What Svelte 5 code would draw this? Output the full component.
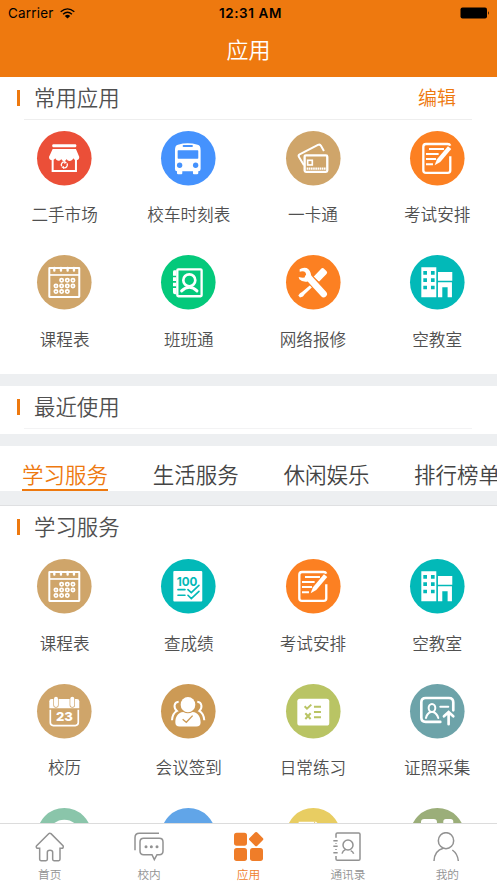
<script lang="ts">
	type App = { name: string; icon: string; color: string };

	const favourites: App[] = [
		{ name: '二手市场', icon: 'market', color: '#eb4f38' },
		{ name: '校车时刻表', icon: 'bus', color: '#4592fd' },
		{ name: '一卡通', icon: 'card', color: '#cfa56a' },
		{ name: '考试安排', icon: 'exam', color: '#fc8022' },
		{ name: '课程表', icon: 'timetable', color: '#cfa56a' },
		{ name: '班班通', icon: 'contacts', color: '#04c97b' },
		{ name: '网络报修', icon: 'repair', color: '#fc8022' },
		{ name: '空教室', icon: 'building', color: '#02b9b8' }
	];

	const services: App[] = [
		{ name: '课程表', icon: 'timetable', color: '#cfa56a' },
		{ name: '查成绩', icon: 'score', color: '#02b9b8' },
		{ name: '考试安排', icon: 'exam', color: '#fc8022' },
		{ name: '空教室', icon: 'building', color: '#02b9b8' },
		{ name: '校历', icon: 'calendar', color: '#cfa56a' },
		{ name: '会议签到', icon: 'meeting', color: '#cc9a55' },
		{ name: '日常练习', icon: 'practice', color: '#b9c464' },
		{ name: '证照采集', icon: 'photo', color: '#6da3a9' },
		{ name: '', icon: 'ring', color: '#8ac5aa' },
		{ name: '', icon: 'plain', color: '#61a5e8' },
		{ name: '', icon: 'document', color: '#e8cd62' },
		{ name: '', icon: 'panels', color: '#9bae79' }
	];

	const categories = ['学习服务', '生活服务', '休闲娱乐', '排行榜单'];
	let category = $state('学习服务');

	const navItems = [
		{ name: '首页', icon: 'home' },
		{ name: '校内', icon: 'chat' },
		{ name: '应用', icon: 'apps' },
		{ name: '通讯录', icon: 'book' },
		{ name: '我的', icon: 'me' }
	];
	let page = $state('应用');

	// timetable dots as [x, y]
	const dots = [
		[74, 76], [91, 76], [108, 76],
		[57, 93], [74, 93], [91, 93], [108, 93],
		[57, 110], [74, 110], [91, 110]
	];
</script>

{#snippet appIcon(icon: string, color: string)}
	<svg class="app-icon" viewBox="0 0 164 164" style:color={color} aria-hidden="true">
		<circle cx="82" cy="82" r="82" fill="currentColor" />
		{#if icon === 'market'}
			<rect class="fill" x="46" y="40" width="72" height="9" rx="3" />
			<path class="fill" d="M47 54H117L127 78C127 90 113 91 109 82C105 92 92 92 89 84C85 93 76 92 73 84C69 92 58 91 55 82C50 91 36 89 36 78Z" />
			<path class="line" stroke-width="6" d="M47 86V120H117V86" />
			<path class="line" stroke-width="4" d="M74 106A9 9 0 0 1 84 93M90 97A9 9 0 0 1 79 110" />
			<path class="fill" d="M82 89L90 95L82 99ZM81 105L73 108L81 114Z" />
		{:else if icon === 'bus'}
			<path class="fill" d="M42 58Q42 42 51 41Q80 33 110 41Q119 42 119 58V114Q119 121 112 121V127Q112 130 108 130H99Q96 130 96 127V121H64V127Q64 130 61 130H52Q48 130 48 127V121Q42 121 42 114Z" />
			<rect x="50" y="58" width="62" height="25" rx="2" fill="currentColor" />
			<rect x="65" y="42" width="31" height="6" rx="3" fill="currentColor" />
			<circle cx="56" cy="103" r="8" fill="currentColor" />
			<circle cx="104" cy="103" r="8" fill="currentColor" />
		{:else if icon === 'card'}
			<path class="line" stroke-width="6" d="M54 103L39 78Q36 73 41 70L96 42Q102 39 105 44L114 60" />
			<rect class="line" stroke-width="7" x="56" y="73" width="68" height="50" rx="4" />
			<rect class="line" stroke-width="5" x="65" y="88" width="14" height="14" />
			<path class="line" stroke-width="7" stroke-dasharray="5 1.5" d="M62 113H119" />
		{:else if icon === 'exam'}
			<path class="line" stroke-width="7" d="M121 44Q119 39 113 39H48Q40 39 40 47V118Q40 126 48 126H113Q121 126 121 118V76" />
			<path class="line" stroke-width="6" d="M57 54H102M48 69H86M48 84H78M48 100H69" />
			<path class="fill" d="M114 46L124 54L91 93L74 103L81 85Z" />
		{:else if icon === 'timetable'}
			<rect class="line" stroke-width="6" x="37" y="39" width="90" height="87" rx="1" />
			<path class="line" stroke-width="5" d="M37 60H127" />
			<path class="line" stroke-width="7" stroke-linecap="round" d="M52 39V47M72 39V47M92 39V47M111 39V47" />
			{#each dots as [x, y]}
				<circle class="line" stroke-width="5" cx={x} cy={y} r="5" />
			{/each}
		{:else if icon === 'contacts'}
			<path class="fill" d="M46 46H39Q36 46 36 52V62H46V67H36V78H46V83H36V94H46V99H36V112Q36 118 42 118H46Z" />
			<rect class="line" stroke-width="7" x="49" y="43" width="73" height="81" rx="3" />
			<circle class="line" stroke-width="8" cx="85" cy="76" r="18" />
			<path class="line" stroke-width="9" stroke-linecap="round" d="M62 108Q85 86 108 108" />
		{:else if icon === 'repair'}
			<path class="fill" d="M105 42Q110 36 115 42L122 49Q126 53 121 58L99 80L82 66Z" />
			<path class="fill" d="M73 90L79 96L56 118L51 125L42 128L37 122L42 115L48 111Z" />
			<path stroke="currentColor" stroke-width="27" d="M70 70L113 115" />
			<path class="line" stroke-width="20" stroke-linecap="round" d="M67 67L113 117" />
			<path class="fill" d="M41 43Q50 36 62 39Q74 44 76 64L64 80Q48 82 40 73L38 66Q54 71 58 66Q63 61 59 53Q54 47 41 50Z" />
		{:else if icon === 'building'}
			<path class="fill" d="M34 37H79V127H34ZM84 51H127V77H84ZM84 82H126V127H113V97H97V127H84Z" />
			<path fill="currentColor" d="M40 48H51V59H40ZM63 48H74V59H63ZM40 70H51V81H40ZM63 70H74V81H63ZM40 92H51V103H40ZM63 92H74V103H63Z" />
		{:else if icon === 'score'}
			<rect class="fill" x="37" y="36" width="87" height="92" rx="3" />
			<text class="score" x="47" y="81" textLength="62" lengthAdjust="spacingAndGlyphs">100</text>
			<path class="cut" stroke-width="5" stroke-linecap="round" d="M51 92H72M51 109H72M81 92L91 101L114 79M81 109L91 119L114 97" />
		{:else if icon === 'calendar'}
			<path class="fill" d="M37 73V52Q37 45 44 45H120Q127 45 127 52V73Z" />
			<path class="line" stroke-width="5" d="M40 77V116Q40 125 49 125H115Q124 125 124 116V77" />
			<rect x="49" y="36" width="16" height="35" rx="8" fill="currentColor" />
			<rect x="98" y="36" width="16" height="35" rx="8" fill="currentColor" />
			<rect class="fill" x="51" y="38" width="12" height="31" rx="6" />
			<rect class="fill" x="100" y="38" width="12" height="31" rx="6" />
			<text class="date" x="57" y="110" textLength="51" lengthAdjust="spacingAndGlyphs">23</text>
		{:else if icon === 'meeting'}
			<path class="line" stroke-width="6" d="M53 53C38 54 37 72 48 81C37 87 34 94 33 109M109 53C124 54 125 72 115 81C125 87 129 94 130 109" />
			<ellipse class="fill" cx="81" cy="62" rx="22" ry="23" />
			<path class="fill" d="M67 84Q81 92 95 84C111 85 119 98 119 115Q119 128 106 128H56Q43 128 43 115C43 98 51 85 67 84Z" />
			<path class="cut" stroke-width="4" d="M65 106L76 115L95 95" />
		{:else if icon === 'practice'}
			<rect class="fill" x="34" y="44" width="96" height="81" rx="8" />
			<path class="cut" stroke-width="6" d="M56 67L63 74L76 62M58 88L74 105M74 88L58 105M84 68H105M84 84H105M84 100H105" />
		{:else if icon === 'photo'}
			<path class="line" stroke-width="8" stroke-linecap="round" d="M91 114H47Q34 114 34 101V55Q34 42 47 42H117Q130 42 130 55V79" />
			<ellipse class="line" stroke-width="6" cx="66" cy="72" rx="10" ry="12" />
			<path class="line" stroke-width="6" stroke-linecap="round" d="M48 102Q51 88 62 84M70 84Q81 88 85 102M91 68H115" />
			<path class="line" stroke-width="8" stroke-linecap="round" d="M116 121V86M102 97L116 84L130 97" />
		{:else if icon === 'ring'}
			<ellipse class="fill" cx="82" cy="77" rx="46" ry="42" />
			<circle cx="82" cy="58" r="12" fill="currentColor" />
		{:else if icon === 'document'}
			<path class="fill" d="M38 41H90L104 54V125H38Z" />
			<path class="cut" stroke-width="3" d="M86 41V53H100" />
		{:else if icon === 'panels'}
			<rect class="fill" x="33" y="33" width="48" height="45" rx="10" />
			<rect class="fill" x="100" y="33" width="30" height="45" rx="8" />
		{/if}
	</svg>
{/snippet}

{#snippet navIcon(icon: string)}
	<svg class="nav-icon" viewBox="0 0 90 90" aria-hidden="true">
		{#if icon === 'home'}
			<path d="M41 5Q44 2 48 5L84 41Q86 45 83 49H75V82Q75 86 71 86H57Q53 86 53 82V61Q53 55 45 55Q37 55 37 61V82Q37 86 33 86H18Q14 86 14 82V49H6Q2 45 5 41Z" />
		{:else if icon === 'chat'}
			<path d="M3 55V17Q3 4 16 4H75" />
			<path d="M29 19H76Q87 19 87 30V57Q87 68 76 68H69L61 83L54 68H29Q18 68 18 57V30Q18 19 29 19Z" />
			<path class="dots" d="M36 44H36.1M52 44H52.1M69 44H69.1" />
		{:else if icon === 'apps'}
			<rect class="solid" x="0" y="2" width="39" height="39" rx="8" />
			<rect class="solid" x="0" y="48" width="39" height="39" rx="8" />
			<rect class="solid" x="48" y="48" width="39" height="39" rx="8" />
			<rect class="solid" x="50" y="5" width="33" height="33" rx="5" transform="rotate(45 66.5 21.5)" />
		{:else if icon === 'book'}
			<path d="M9 17V7Q9 3 13 3H77Q81 3 81 7V81Q81 85 77 85H13Q9 85 9 81V72M1 26H14M1 43H14M1 62H14M9 34V36M9 51V54" />
			<circle cx="45" cy="39" r="15" />
			<path d="M38 52Q29 56 27 65M53 56Q60 59 62 65" />
		{:else}
			<ellipse cx="42" cy="26" rx="23" ry="24" />
			<path d="M6 87C7 67 18 53 34 49M61 54Q77 65 79 87" />
		{/if}
	</svg>
{/snippet}

{#snippet appGrid(apps: App[])}
	<div class="grid">
		{#each apps as app}
			<div class="tile">
				{@render appIcon(app.icon, app.color)}
				<span class="tile-name">{app.name}</span>
			</div>
		{/each}
	</div>
{/snippet}

<div class="screen">
	<header>
		<div class="status">
			<div class="carrier">
				<span>Carrier</span>
				<svg class="wifi" viewBox="0 0 44 32" aria-hidden="true">
					<path d="M2 11Q22 -6 42 11M9 18Q22 7 35 18" />
					<path class="wifi-dot" d="M14 23Q22 16 30 23L22 31Z" />
				</svg>
			</div>
			<span class="time">12:31 AM</span>
			<svg class="battery" viewBox="0 0 30 12" aria-hidden="true">
				<rect x="0.5" y="0.5" width="26.5" height="11" rx="2" />
				<path d="M28 4Q29.7 6 28 8Z" />
			</svg>
		</div>
		<h1>应用</h1>
	</header>

	<main>
		<section class="favourites">
			<div class="section-head">
				<h2>常用应用</h2>
				<button class="edit">编辑</button>
			</div>
			{@render appGrid(favourites)}
		</section>

		<section class="recent">
			<div class="section-head">
				<h2>最近使用</h2>
			</div>
		</section>

		<nav class="categories">
			{#each categories as name}
				<button class:active={name === category} onclick={() => (category = name)}>{name}</button>
			{/each}
		</nav>

		<section class="services">
			<div class="section-head">
				<h2>学习服务</h2>
			</div>
			{@render appGrid(services)}
		</section>
	</main>

	<nav class="tab-bar">
		{#each navItems as item}
			<button class:active={item.name === page} onclick={() => (page = item.name)}>
				{@render navIcon(item.icon)}
				<span>{item.name}</span>
			</button>
		{/each}
	</nav>
</div>

<style>
	:global(body) {
		margin: 0;
	}

	.screen {
		display: flex;
		flex-direction: column;
		width: 497px;
		height: 883px;
		overflow: hidden;
		background: #fff;
		color: #505050;
		font-family: 'Noto Sans CJK SC', sans-serif;
		font-weight: 350;
	}

	button {
		padding: 0;
		border: 0;
		background: none;
		font: inherit;
		color: inherit;
		white-space: nowrap;
	}

	h1,
	h2 {
		margin: 0;
		font-weight: 350;
	}

	header {
		flex: none;
		height: 77px;
		background: #ee790f;
	}

	.status {
		display: grid;
		grid-template-columns: 1fr auto 1fr;
		align-items: center;
		height: 26px;
		padding: 0 7px 0 8px;
		font: 13.5px Inter, sans-serif;
		color: #000;
	}

	.carrier {
		display: flex;
		align-items: center;
		gap: 6px;
		letter-spacing: 0.2px;
	}

	.wifi {
		width: 15px;
		height: 11px;
		fill: none;
		stroke: #000;
		stroke-width: 4;
	}

	.wifi-dot {
		fill: #000;
		stroke: none;
	}

	.time {
		padding-left: 3px;
		font-weight: 600;
		letter-spacing: 0.6px;
	}

	.battery {
		justify-self: end;
		width: 30px;
		height: 12px;
	}

	h1 {
		font-size: 22px;
		line-height: 45px;
		text-align: center;
		color: #fff;
	}

	main {
		flex: 1;
		min-height: 0;
		overflow: hidden;
		background: #edeff1;
	}

	section {
		background: #fff;
	}

	.section-head {
		display: flex;
		align-items: center;
		justify-content: space-between;
		box-sizing: border-box;
		height: 43px;
		margin: 0 25px 0 24px;
		padding-bottom: 2px;
		border-bottom: 1px solid #eee;
	}

	h2 {
		display: flex;
		align-items: center;
		gap: 14px;
		margin-left: -7px;
		font-size: 21.4px;
		line-height: 28px;
	}

	h2::before {
		content: '';
		width: 3px;
		height: 16px;
		margin-top: 1px;
		background: #ee790f;
	}

	.edit {
		margin-right: 16px;
		font-size: 19px;
		line-height: 30px;
		color: #ee790f;
	}

	.grid {
		display: grid;
		grid-template-columns: repeat(4, 124.2px);
		row-gap: 28.6px;
		padding: 10.7px 0 0 2.5px;
	}

	.tile {
		display: flex;
		flex-direction: column;
		align-items: center;
	}

	.app-icon {
		width: 54.6px;
		height: 54.6px;
		overflow: visible;
	}

	.fill {
		fill: #fff;
	}

	.line {
		fill: none;
		stroke: #fff;
	}

	.cut {
		fill: none;
		stroke: currentColor;
	}

	.score,
	.date {
		font-family: Inter, sans-serif;
		font-size: 37px;
		font-weight: 700;
		fill: currentColor;
	}

	.date {
		font-weight: 800;
		fill: #fff;
	}

	.tile-name {
		height: 24px;
		margin-top: 17.2px;
		font-size: 16.6px;
		line-height: 24px;
	}

	.favourites {
		height: 297px;
	}

	.recent {
		height: 48px;
		margin-top: 12px;
	}

	.recent .section-head {
		border-color: #f3f3f4;
	}

	.categories {
		display: flex;
		align-items: flex-end;
		gap: 44.7px;
		height: 45px;
		margin: 12px 0 14px;
		padding-left: 22px;
		overflow: hidden;
		background: #fff;
		font-size: 21.5px;
		line-height: 32px;
		color: #444;
	}

	.categories button {
		box-sizing: border-box;
		height: 34px;
		padding-top: 1px;
		border-bottom: 2px solid transparent;
	}

	.categories .active {
		border-color: #ee790f;
		color: #ee790f;
	}

	.services {
		border-top: 1px solid #dfe0e2;
	}

	.services .section-head {
		height: 42.6px;
		border: 0;
	}

	.tab-bar {
		display: flex;
		flex: none;
		box-sizing: border-box;
		height: 60px;
		border-top: 1px solid #dcdcdc;
		background: #fff;
	}

	.tab-bar button {
		display: flex;
		flex: 1;
		flex-direction: column;
		align-items: center;
		padding-top: 8px;
		font-size: 11.7px;
		line-height: 18px;
		color: #929292;
	}

	.tab-bar .active {
		color: #ef7d29;
	}

	.nav-icon {
		width: 30px;
		height: 30px;
		margin-bottom: 3px;
		fill: none;
		stroke: currentColor;
		stroke-width: 4.5;
	}

	.dots {
		stroke-width: 9;
		stroke-linecap: round;
	}

	.solid {
		fill: currentColor;
		stroke: none;
	}
</style>
